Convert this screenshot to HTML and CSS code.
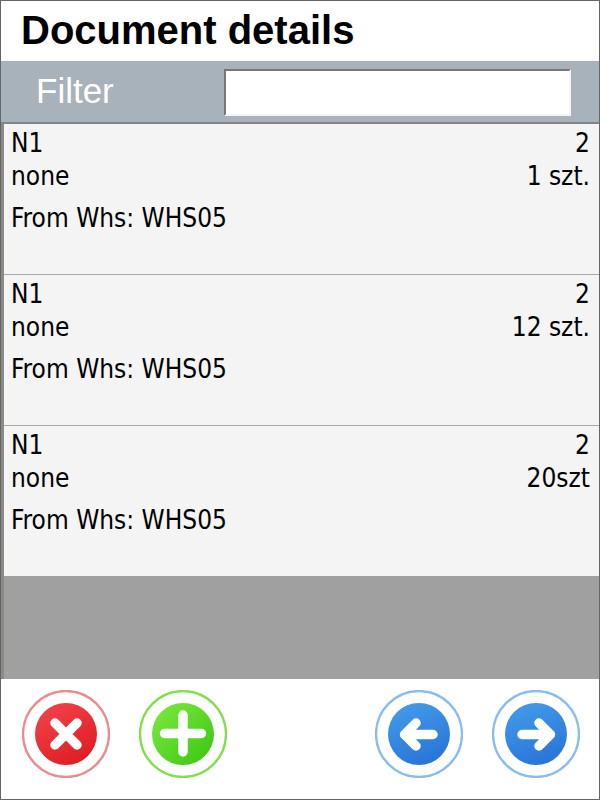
FILE: index.html
```html
<!DOCTYPE html>
<html lang="en">
<head>
<meta charset="utf-8">
<title>Document details</title>
<link rel="stylesheet" href="styles.css">
</head>
<body>
<main class="window">
  <h1 class="title">Document details</h1>
  <form class="filter">
    <label class="filter-label" for="filter">Filter</label>
    <input class="filter-input" id="filter" type="text">
  </form>
  <ul class="list">
    <li class="item">
      <div class="line"><span>N1</span><span>2</span></div>
      <div class="line"><span>none</span><span>1 szt.</span></div>
      <div class="source">From Whs: WHS05</div>
    </li>
    <li class="item">
      <div class="line"><span>N1</span><span>2</span></div>
      <div class="line"><span>none</span><span>12 szt.</span></div>
      <div class="source">From Whs: WHS05</div>
    </li>
    <li class="item">
      <div class="line"><span>N1</span><span>2</span></div>
      <div class="line"><span>none</span><span>20szt</span></div>
      <div class="source">From Whs: WHS05</div>
    </li>
  </ul>
  <footer class="toolbar">
    <div class="group">
      <button class="round" type="button" aria-label="Cancel">
        <svg class="icon" viewBox="0 0 88 88">
          <defs><linearGradient id="red" x1="0.2" y1="0" x2="0.8" y2="1"><stop offset="0" stop-color="#f04349"/><stop offset="1" stop-color="#de1b22"/></linearGradient></defs>
          <circle cx="44" cy="44" r="43" fill="#fff" stroke="#ec8a8e" stroke-width="2.300"/>
          <circle cx="44" cy="44" r="31" fill="url(#red)"/>
          <path d="M33 33L55 55M55 33L33 55" fill="none" stroke="#fff" stroke-width="9.500" stroke-linecap="round"/>
        </svg>
      </button>
      <button class="round" type="button" aria-label="Add">
        <svg class="icon" viewBox="0 0 88 88">
          <defs><linearGradient id="green" x1="0.1" y1="0.1" x2="0.9" y2="0.9"><stop offset="0" stop-color="#78e63c"/><stop offset="1" stop-color="#3fca14"/></linearGradient></defs>
          <circle cx="44" cy="44" r="43" fill="#fff" stroke="#7fe04c" stroke-width="2.300"/>
          <circle cx="44" cy="44" r="31" fill="url(#green)"/>
          <path d="M44 25V62M25.500 43.500H62.500" fill="none" stroke="#fff" stroke-width="9.500" stroke-linecap="round"/>
        </svg>
      </button>
    </div>
    <div class="group">
      <button class="round" type="button" aria-label="Previous">
        <svg class="icon" viewBox="0 0 88 88">
          <defs><linearGradient id="blue" x1="0.3" y1="0" x2="0.7" y2="1"><stop offset="0" stop-color="#429ae8"/><stop offset="1" stop-color="#2873d8"/></linearGradient></defs>
          <circle cx="44" cy="44" r="43" fill="#fff" stroke="#87bdf0" stroke-width="2.300"/>
          <circle cx="44" cy="44" r="31" fill="url(#blue)"/>
          <path d="M58 44.500H31M41 33L29.500 44.500L41 56" fill="none" stroke="#fff" stroke-width="9.500" stroke-linecap="round" stroke-linejoin="round"/>
        </svg>
      </button>
      <button class="round" type="button" aria-label="Next">
        <svg class="icon" viewBox="0 0 88 88">
          <circle cx="44" cy="44" r="43" fill="#fff" stroke="#87bdf0" stroke-width="2.300"/>
          <circle cx="44" cy="44" r="31" fill="url(#blue)"/>
          <path d="M30 44.500H57M47 33L58.500 44.500L47 56" fill="none" stroke="#fff" stroke-width="9.500" stroke-linecap="round" stroke-linejoin="round"/>
        </svg>
      </button>
    </div>
  </footer>
</main>
</body>
</html>
```
FILE: styles.css
```css
* {
  box-sizing: border-box;
}

body {
  margin: 0;
  background: #fff;
  color: #000;
}

.window {
  display: flex;
  flex-direction: column;
  min-height: 100vh;
  border: 1px solid #666;
}

.title {
  margin: 0;
  padding: 0 20px 2px;
  font: bold 40px/58px "Liberation Sans", Arial, sans-serif;
}

.filter {
  display: grid;
  grid-template-columns: 3fr 5fr;
  align-items: center;
  padding: 8px 28px 6px 15px;
  background: #a8b2bb;
}

.filter-label {
  padding: 0 20px 4px;
  color: #fff;
  font: 35px/40px "Liberation Sans", Arial, sans-serif;
}

.filter-input {
  width: 100%;
  height: 47px;
  padding: 4px 8px;
  border: 2px solid;
  border-color: #777 #f4f4f4 #f4f4f4 #777;
  background: #fff;
  font: 26px/36px "DejaVu Sans Condensed", Tahoma, sans-serif;
}

.list {
  flex: 1;
  margin: 0;
  padding: 0;
  border-top: 2px solid #848484;
  border-left: 3px solid #8c8a88;
  background: #a0a0a0;
  list-style: none;
  font: 26px/33px "DejaVu Sans Condensed", Tahoma, sans-serif;
}

.item {
  padding: 3px 9px 39px 7px;
  background: #f4f4f4;
}

.item + .item {
  border-top: 1px solid #a8a8a8;
}

.line {
  display: flex;
  justify-content: space-between;
}

.source {
  margin-top: 9px;
}

.toolbar {
  display: flex;
  justify-content: space-between;
  padding: 11px 19px 21px 21px;
}

.group {
  display: flex;
  gap: 29px;
}

.round {
  width: 88px;
  height: 88px;
  padding: 0;
  border: 0;
  border-radius: 50%;
  background: none;
}

.icon {
  display: block;
  width: 100%;
  height: 100%;
}
```
